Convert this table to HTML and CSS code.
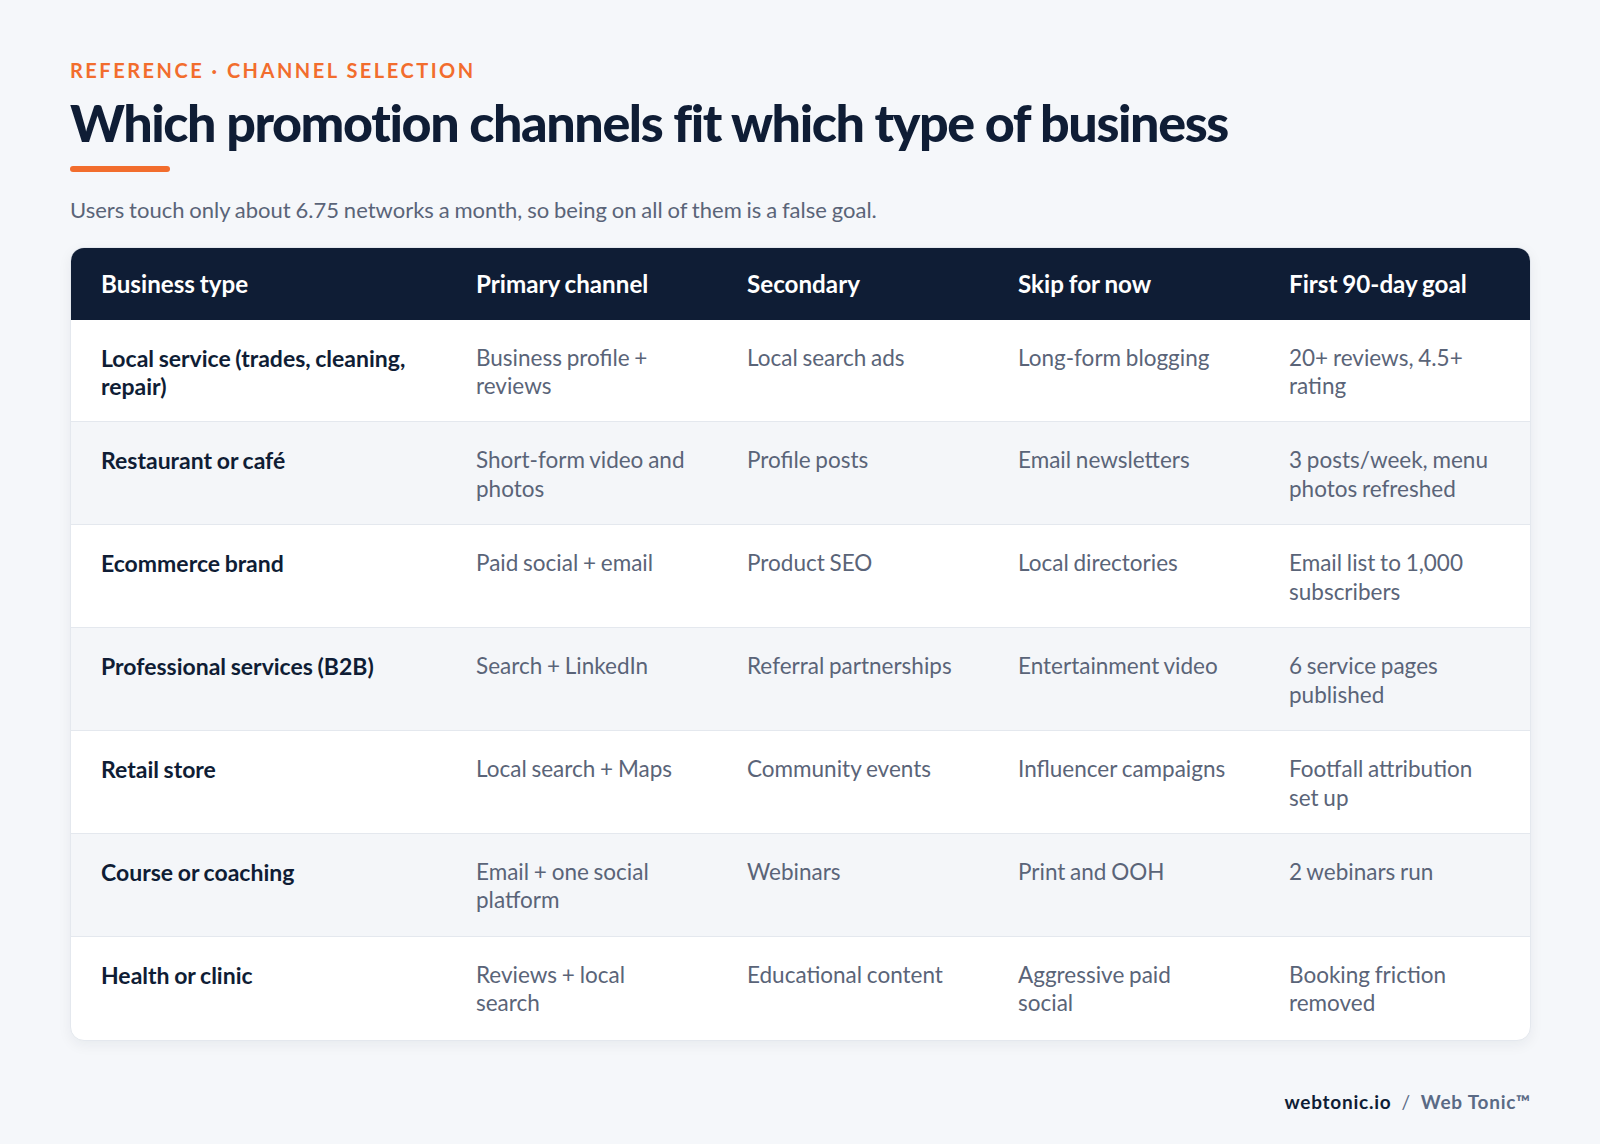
FILE: index.html
```html
<!DOCTYPE html>
<html lang="en">
<head>
<meta charset="utf-8">
<title>Channel selection</title>
<link rel="stylesheet" href="styles.css">
</head>
<body>
<main class="page">
  <p class="eyebrow">Reference · Channel selection</p>
  <h1 class="title">Which promotion channels fit which type of business</h1>
  <div class="accent"></div>
  <p class="subtitle">Users touch only about 6.75 networks a month, so being on all of them is a false goal.</p>

  <div class="table">
    <div class="row head">
      <div class="cell">Business type</div>
      <div class="cell">Primary channel</div>
      <div class="cell">Secondary</div>
      <div class="cell">Skip for now</div>
      <div class="cell">First 90-day goal</div>
    </div>
    <div class="row">
      <div class="cell name">Local service (trades, cleaning, repair)</div>
      <div class="cell">Business profile + reviews</div>
      <div class="cell">Local search ads</div>
      <div class="cell">Long-form blogging</div>
      <div class="cell">20+ reviews, 4.5+ rating</div>
    </div>
    <div class="row alt">
      <div class="cell name">Restaurant or café</div>
      <div class="cell">Short-form video and photos</div>
      <div class="cell">Profile posts</div>
      <div class="cell">Email newsletters</div>
      <div class="cell">3 posts/week, menu photos refreshed</div>
    </div>
    <div class="row">
      <div class="cell name">Ecommerce brand</div>
      <div class="cell">Paid social + email</div>
      <div class="cell">Product SEO</div>
      <div class="cell">Local directories</div>
      <div class="cell">Email list to 1,000 subscribers</div>
    </div>
    <div class="row alt">
      <div class="cell name">Professional services (B2B)</div>
      <div class="cell">Search + LinkedIn</div>
      <div class="cell">Referral partnerships</div>
      <div class="cell">Entertainment video</div>
      <div class="cell">6 service pages published</div>
    </div>
    <div class="row">
      <div class="cell name">Retail store</div>
      <div class="cell">Local search + Maps</div>
      <div class="cell">Community events</div>
      <div class="cell">Influencer campaigns</div>
      <div class="cell">Footfall attribution set up</div>
    </div>
    <div class="row alt">
      <div class="cell name">Course or coaching</div>
      <div class="cell">Email + one social platform</div>
      <div class="cell">Webinars</div>
      <div class="cell">Print and OOH</div>
      <div class="cell">2 webinars run</div>
    </div>
    <div class="row last">
      <div class="cell name">Health or clinic</div>
      <div class="cell">Reviews + local search</div>
      <div class="cell">Educational content</div>
      <div class="cell">Aggressive paid social</div>
      <div class="cell">Booking friction removed</div>
    </div>
  </div>

  <footer class="footer">
    <span class="domain">webtonic.io</span>
    <span class="sep">/</span>
    <span class="brand">Web Tonic™</span>
  </footer>
</main>
</body>
</html>
```

FILE: styles.css
```css
* { box-sizing: border-box; }

html, body {
  margin: 0;
  padding: 0;
  background: #f5f7fa;
}

body {
  font-family: "Lato", "Liberation Sans", sans-serif;
  color: #0f1d35;
}

.page {
  width: 1600px;
  height: 1144px;
  padding: 58px 69px 0 70px;
  display: flex;
  flex-direction: column;
}

.eyebrow {
  margin: 0;
  font-size: 20px;
  font-weight: 700;
  letter-spacing: 0.125em;
  text-transform: uppercase;
  color: #f26d2d;
  line-height: 24px;
}

.title {
  margin: 8px 0 0 0;
  font-size: 52px;
  font-weight: 900;
  letter-spacing: -0.027em;
  line-height: 64px;
  color: #0f1d35;
}

.accent {
  margin-top: 12px;
  width: 100px;
  height: 6px;
  border-radius: 3px;
  background: #f26d2d;
}

.subtitle {
  margin: 23px 0 0 0;
  font-size: 22px;
  line-height: 30px;
  word-spacing: -0.8px;
  color: #5a6478;
}

.table {
  margin-top: 22px;
  background: #ffffff;
  border: 1px solid #e4e8ee;
  border-radius: 14px;
  overflow: hidden;
  box-shadow: 0 4px 14px rgba(15, 29, 53, 0.06);
}

.row {
  display: grid;
  grid-template-columns: 375px repeat(4, 1fr);
  border-bottom: 1px solid #e4e8ee;
  min-height: 102.9px;
}

.row.alt { background: #f4f6f9; }
.row.last { border-bottom: none; }

.row.head {
  background: #0f1d35;
  min-height: 0;
  border-bottom: none;
}

.cell {
  padding: 24px 30px 20px 30px;
  font-size: 22.5px;
  line-height: 28.5px;
  word-spacing: -1px;
  color: #5a6478;
}

.head .cell {
  padding: 22px 30px 21px 30px;
  font-size: 24.2px;
  color: #ffffff;
  font-weight: 700;
}

.cell.name {
  font-size: 23px;
  color: #0f1d35;
  font-weight: 700;
}

.footer {
  margin-top: auto;
  margin-bottom: 31px;
  align-self: flex-end;
  display: flex;
  gap: 10px;
  font-size: 19px;
  font-weight: 700;
  letter-spacing: 0.04em;
}

.domain { color: #0f1d35; }
.sep { color: #5a6a85; font-weight: 400; }
.brand { color: #5a6a85; }
```
